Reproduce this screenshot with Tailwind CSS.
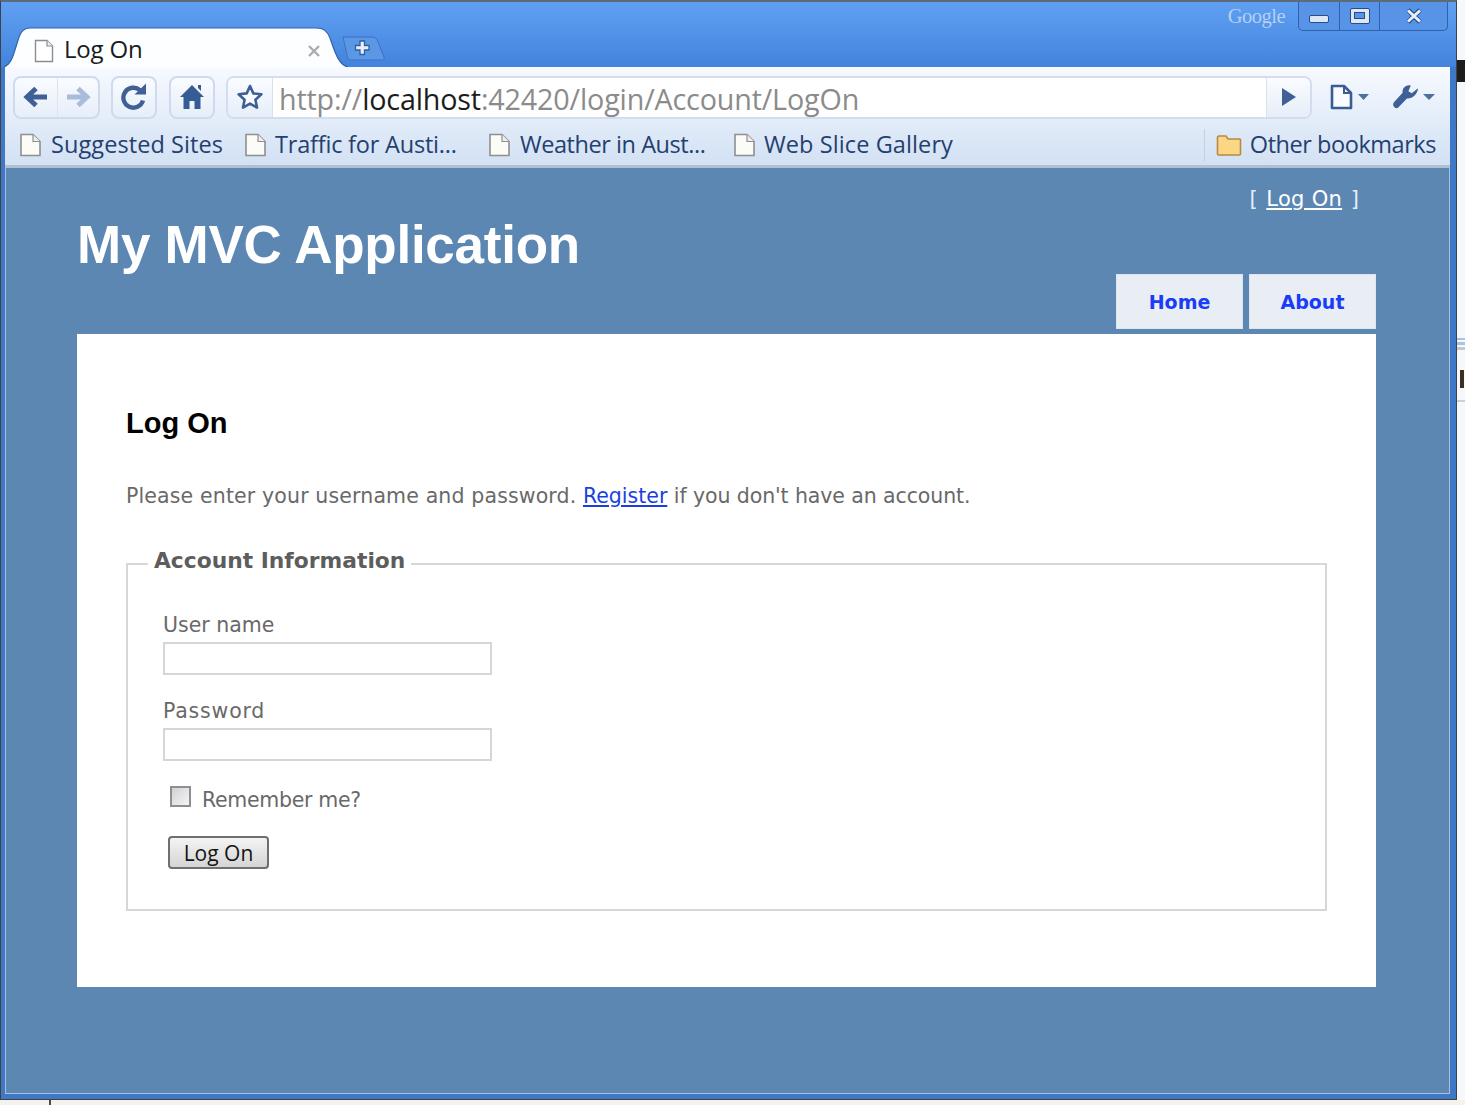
<!DOCTYPE html>
<html lang="en">
<head>
<meta charset="utf-8">
<title>Log On</title>
<script src="https://cdn.jsdelivr.net/npm/@tailwindcss/browser@4"></script>
</head>
<body class="m-0 bg-white">
<div class="w-[1465px] h-[1105px] overflow-hidden flex flex-col bg-[#f4f2ea]">
  <div class="flex h-[1100px] shrink-0">
    <!-- browser window -->
    <div class="w-[1457px] shrink-0 flex flex-col border-t-2 border-t-[#5d6a78] border-r border-r-[#3d4148] border-l border-l-[#3d4148] border-b border-b-[#3d4148] bg-[#4078c8] pl-[4px] pr-[6px] pb-[5px] relative">
      <!-- title bar -->
      <div class="h-[65px] -ml-[4px] -mr-[6px] shrink-0 bg-gradient-to-b from-[#5fa0f3] to-[#4483dc] relative flex items-end pl-[3px]">
        <!-- tab -->
        <div class="relative w-[344px] h-[40px] shrink-0">
          <svg class="absolute inset-0" width="344" height="40" viewBox="0 0 344 40">
            <path d="M0 40 C5 38 8 33 10 26 L15 10 C17 4 20 1 26 1 L312 1 C320 1 323 4 326 11 C330 22 334 38 344 40 Z" fill="#fdfeff"/>
            <path d="M0 40 C5 38 8 33 10 26 L15 10 C17 4 20 1 26 1 L312 1 C320 1 323 4 326 11 C330 22 334 38 344 40" fill="none" stroke="#2f66ad" stroke-width="1.2"/>
          </svg>
          <svg class="absolute left-[30px] top-[12px]" width="20" height="24" viewBox="0 0 20 24"><path d="M1.5 1.5H13L18.500 7V22.500H1.500Z" fill="#fff" stroke="#8d8d8d" stroke-width="1.400"/><path d="M13 1.500V7H18.500" fill="#eee" stroke="#8d8d8d" stroke-width="1.200"/></svg>
          <span class="absolute left-[60px] top-[6px] font-['Open_Sans'] text-[24px] leading-[32px] tracking-[-0.2px] text-[#1b1b1b]">Log On</span>
          <svg class="absolute left-[303px] top-[17px]" width="14" height="14" viewBox="0 0 14 14"><path d="M2 2L12 12M12 2L2 12" stroke="#acacac" stroke-width="2.400"/></svg>
        </div>
        <!-- new tab button -->
        <div class="relative w-[44px] h-[26px] -ml-[6px] mb-[6px] shrink-0">
          <svg class="absolute inset-0" width="44" height="26" viewBox="0 0 44 26"><path d="M1 2 H30 C34 2 35 4 36 7 L42 22 C43 24 41 25 39 25 H10 C7 25 6 24 5 20 Z" fill="#5c97e6" stroke="#3a72c0" stroke-width="1"/><path d="M18 6h4.500v4.500h4.500v4.500h-4.500v4.500h-4.500v-4.500h-4.500v-4.500h4.500z" fill="#e6effb" stroke="#2f5f9e" stroke-width="1.300"/></svg>
        </div>
        <!-- google + window controls -->
        <div class="absolute top-0 right-[8px] flex items-start">
          <span class="font-['Liberation_Serif'] text-[20.500px] leading-[28px] text-[#b4d0f4] mr-[13px] tracking-[-0.5px]">Google</span>
          <div class="flex h-[29px] w-[150px] border border-t-0 border-[#2f62a8] rounded-b-[5px] bg-[#5793e6]">
            <div class="w-[41px] flex items-center justify-center border-r border-[#2f62a8]"><div class="w-[20px] h-[8px] mt-[6px] rounded-[2px] bg-[#dbe7f6] border border-[#2a4c80]"></div></div>
            <div class="w-[40px] flex items-center justify-center border-r border-[#2f62a8]"><div class="w-[20px] h-[16px] -mt-[1px] rounded-[2px] bg-[#dbe7f6] border border-[#2a4c80] flex items-center justify-center"><div class="w-[11px] h-[7px] bg-[#5793e6] border border-[#2a4c80]"></div></div></div>
            <div class="flex-1 flex items-center justify-center"><svg class="-mt-[1px]" width="20" height="16" viewBox="0 0 20 16"><path d="M4 2L16 14M16 2L4 14" stroke="#2a4c80" stroke-width="4.600" fill="none"/><path d="M4 2.500L16 13.500M16 2.500L4 13.500" stroke="#e6eefa" stroke-width="3" fill="none"/></svg></div>
          </div>
        </div>
      </div>
      <!-- toolbar -->
      <div class="h-[101px] shrink-0 bg-gradient-to-b from-[#f7faff] to-[#d2e1f4] border-b-2 border-b-[#b5bfcb] flex flex-col border-t border-t-[#3a72c0] -mt-px">
        <div class="h-[52px] shrink-0 flex items-center pt-[8px] pl-[8px] pr-[15px]">
          <div class="w-[87px] h-[43px] rounded-[8px] border-2 border-[#cfdaee] bg-gradient-to-b from-[#fafcff] to-[#e6eef9] flex shrink-0">
            <div class="w-[43px] flex items-center justify-center border-r border-[#dbe4f2]"><svg width="26" height="24" viewBox="0 0 26 24"><path d="M24 12H6M13 3.500L4 12L13 20.500" fill="none" stroke="#3f6096" stroke-width="5"/></svg></div>
            <div class="flex-1 flex items-center justify-center"><svg width="26" height="24" viewBox="0 0 26 24"><path d="M2 12H20M13 3.500L22 12L13 20.500" fill="none" stroke="#a9bcdc" stroke-width="5"/></svg></div>
          </div>
          <div class="w-[46px] h-[43px] ml-[11px] rounded-[8px] border-2 border-[#cfdaee] bg-gradient-to-b from-[#fafcff] to-[#e6eef9] flex items-center justify-center shrink-0">
            <svg width="28" height="28" viewBox="0 0 28 28"><path d="M20 7.200A10 10 0 1 0 23 17.500" fill="none" stroke="#3f6096" stroke-width="4.400"/><path d="M14.500 11.500H26V0.500Z" fill="#3f6096"/></svg>
          </div>
          <div class="w-[46px] h-[43px] ml-[12px] rounded-[8px] border-2 border-[#cfdaee] bg-gradient-to-b from-[#fafcff] to-[#e6eef9] flex items-center justify-center shrink-0">
            <svg width="26" height="28" viewBox="0 0 26 28"><path d="M13 2L25 14H21.500V26H15.500V18H10.500V26H4.500V14H1Z" fill="#355c94"/><path d="M19 2H22V8L19 5Z" fill="#355c94"/></svg>
          </div>
          <div class="flex-1 ml-[11px] h-[43px] rounded-[8px] border-2 border-[#d3ddef] bg-white flex items-stretch overflow-hidden">
            <div class="w-[45px] shrink-0 bg-gradient-to-b from-[#fafcff] to-[#e6eef9] border-r border-[#d8e1f0] flex items-center justify-center">
              <svg width="28" height="28" viewBox="0 0 28 28"><path d="M14 3L17.300 10.400L25.400 11.300L19.400 16.700L21 24.600L14 20.600L7 24.600L8.600 16.700L2.600 11.300L10.700 10.400Z" fill="#fafcff" stroke="#3f6096" stroke-width="2.600" stroke-linejoin="round"/></svg>
            </div>
            <div class="flex-1 pl-[6px] font-['Open_Sans'] text-[28.700px] leading-[42px] tracking-[-0.15px] text-[#8b8b8b] whitespace-nowrap overflow-hidden">http://<span class="text-[#1c1c1c]">localhost</span>:42420/login/Account/LogOn</div>
            <div class="w-[44px] shrink-0 bg-gradient-to-b from-[#fafcff] to-[#e6eef9] border-l border-[#d8e1f0] flex items-center justify-center">
              <svg width="16" height="20" viewBox="0 0 16 20"><path d="M1 1L15 10L1 19Z" fill="#3f6096"/></svg>
            </div>
          </div>
          <div class="w-[39px] ml-[18px] shrink-0 flex items-center justify-between">
            <svg width="23" height="26" viewBox="0 0 23 26"><path d="M2 2H14L21 9V24H2Z" fill="#f8fbff" stroke="#3a5c92" stroke-width="2.600" stroke-linejoin="round"/><path d="M14 2V9H21" fill="none" stroke="#3a5c92" stroke-width="2"/></svg>
            <svg width="11" height="6" viewBox="0 0 11 6"><path d="M0 0H11L5.500 6Z" fill="#4e6f9f"/></svg>
          </div>
          <div class="w-[43px] ml-[23px] shrink-0 flex items-center justify-between">
            <svg width="27" height="26" viewBox="0 0 28 26"><path d="M27 4L20.500 9L17 7L19.500 1C15 0 10.500 3 11 8.500L2 18.500C0 21 2 25.500 6 24.500L15.500 14.500C21 15 26.500 10.500 27 4Z" fill="#3f6096"/></svg>
            <svg width="12" height="6" viewBox="0 0 12 6"><path d="M0 0H12L6 6Z" fill="#4e6f9f"/></svg>
          </div>
        </div>
        <!-- bookmarks -->
        <div class="flex-1 flex items-center pl-[14px] pr-[14px] pt-[5px] font-['Open_Sans'] text-[23.500px] text-[#24406f] whitespace-nowrap">
          <svg class="shrink-0" width="23" height="24" viewBox="0 0 23 24"><path d="M2 1.500H14L21 8.500V22.500H2Z" fill="#fbfbf8" stroke="#8f8f8f" stroke-width="1.600"/><path d="M14 1.500V8.500H21" fill="#eee" stroke="#8f8f8f" stroke-width="1.200"/></svg>
          <span class="ml-[9px] w-[193px] shrink-0 tracking-[0.08px]">Suggested Sites</span>
          <svg class="shrink-0" width="23" height="24" viewBox="0 0 23 24"><path d="M2 1.500H14L21 8.500V22.500H2Z" fill="#fbfbf8" stroke="#8f8f8f" stroke-width="1.600"/><path d="M14 1.500V8.500H21" fill="#eee" stroke="#8f8f8f" stroke-width="1.200"/></svg>
          <span class="ml-[8px] w-[213px] shrink-0 tracking-[-0.2px]">Traffic for Austi...</span>
          <svg class="shrink-0" width="23" height="24" viewBox="0 0 23 24"><path d="M2 1.500H14L21 8.500V22.500H2Z" fill="#fbfbf8" stroke="#8f8f8f" stroke-width="1.600"/><path d="M14 1.500V8.500H21" fill="#eee" stroke="#8f8f8f" stroke-width="1.200"/></svg>
          <span class="ml-[9px] w-[213px] shrink-0 tracking-[-0.45px]">Weather in Aust...</span>
          <svg class="shrink-0" width="23" height="24" viewBox="0 0 23 24"><path d="M2 1.500H14L21 8.500V22.500H2Z" fill="#fbfbf8" stroke="#8f8f8f" stroke-width="1.600"/><path d="M14 1.500V8.500H21" fill="#eee" stroke="#8f8f8f" stroke-width="1.200"/></svg>
          <span class="ml-[8px] shrink-0 tracking-[0.1px]">Web Slice Gallery</span>
          <div class="ml-auto h-[32px] border-l border-[#c3d0e2] pl-[11px] flex items-center">
            <svg class="shrink-0" width="26" height="22" viewBox="0 0 26 22"><path d="M1.500 5V20C1.500 20.500 2 21 2.500 21H23.500C24 21 24.500 20.500 24.500 20V6C24.500 5.500 24 5 23.500 5H12L10 2H3C2 2 1.500 3 1.500 4Z" fill="#fbd684" stroke="#b58a44" stroke-width="1.600"/></svg>
            <span class="ml-[8px] shrink-0 tracking-[-0.45px]">Other bookmarks</span>
          </div>
        </div>
      </div>
      <!-- page viewport -->
      <div class="flex-1 bg-[#5c87b2] border border-[#a9c0da] font-['DejaVu_Sans'] pl-[71px] pr-[73px] flex flex-col">
        <div class="relative h-[166px] shrink-0">
          <div class="absolute right-[17px] top-[17px] text-[21px] leading-[28px] text-[#e6edf5]">[ <a class="underline text-white ml-[2px] mr-[2px] tracking-[0.3px]" href="#">Log On</a> ]</div>
          <h1 class="absolute left-0 top-[45px] font-['Liberation_Sans'] font-bold text-[53px] leading-[64px] text-white tracking-[-0.25px]">My MVC Application</h1>
          <div class="absolute right-0 bottom-[5px] flex gap-[6px]">
            <a href="#" class="w-[127px] h-[55px] pt-[2px] flex items-center justify-center bg-[#e9eef4] border border-[#dde6f0] font-bold text-[19px] text-[#1a3cf8]">Home</a>
            <a href="#" class="w-[127px] h-[55px] pt-[2px] flex items-center justify-center bg-[#e9eef4] border border-[#dde6f0] font-bold text-[19px] text-[#1a3cf8]">About</a>
          </div>
        </div>
        <!-- main -->
        <main class="h-[653px] shrink-0 bg-white pl-[49px] pr-[49px] pt-[71px]">
          <h2 class="font-['Liberation_Sans'] font-bold text-[29px] leading-[36px] text-black">Log On</h2>
          <p class="mt-[41px] text-[20.500px] leading-[28px] text-[#696969]"><span class="tracking-[0.14px]">Please enter your username and password.</span> <a href="#" class="underline text-[#1a3fe0]">Register</a> <span class="tracking-[-0.1px]">if you don't have an account.</span></p>
          <fieldset class="mt-[40px] h-[361px] border-2 border-[#d4d8d8] pl-[35px] pt-[32px]">
            <legend class="-ml-[15px] px-[6px] -translate-y-[3px] font-bold text-[21.800px] leading-[28px] text-[#5d5d5d]">Account Information</legend>
            <label class="block text-[20.500px] leading-[30px] text-[#696969]">User name</label>
            <div class="mt-[2px] w-[329px] h-[33px] border-2 border-[#d6d6d6] bg-white"></div>
            <label class="block mt-[21px] text-[20.500px] leading-[30px] text-[#696969] tracking-[0.8px]">Password</label>
            <div class="mt-[2px] w-[329px] h-[33px] border-2 border-[#d6d6d6] bg-white"></div>
            <div class="mt-[25px] ml-[7px] flex items-center">
              <div class="w-[21px] h-[21px] border-2 border-[#8f8f8f] bg-gradient-to-br from-[#cfd1d6] to-[#f6f6f6] -mt-[8px] shrink-0"></div>
              <span class="ml-[11px] text-[20.500px] leading-[28px] text-[#696969] tracking-[-0.3px]">Remember me?</span>
            </div>
            <button class="mt-[22px] ml-[5px] w-[101px] h-[33px] block rounded-[4px] border-2 border-[#6f6f6f] bg-gradient-to-b from-[#f4f4f4] to-[#d5d5d5] font-['Open_Sans'] text-[21px] leading-[26px] text-[#141414]">Log On</button>
          </fieldset>
        </main>
      </div>
    </div>
    <!-- window behind, right edge -->
    <div class="flex-1 flex flex-col bg-[#f6f8fc] pt-[60px]">
      <div class="h-[22px] bg-[#1c1c1c]"></div>
      <div class="h-[256px]"></div>
      <div class="h-[2px] bg-[#a8c4e4]"></div>
      <div class="h-[3px] mt-[2px] bg-[#a8c4e4]"></div>
      <div class="h-[3px] mt-[2px] bg-[#c9c9c9]"></div>
      <div class="mt-[20px] ml-[3px] w-[4px] h-[18px] bg-[#3a3020]"></div>
      <div class="mt-[12px] h-[2px] bg-[#cfcfcf]"></div>
    </div>
  </div>
  <div class="h-[5px] shrink-0 pl-[49px] bg-[#f4f2ea]"><div class="w-[2px] h-[5px] bg-[#5a4a30]"></div></div>
</div>
</body>
</html>
